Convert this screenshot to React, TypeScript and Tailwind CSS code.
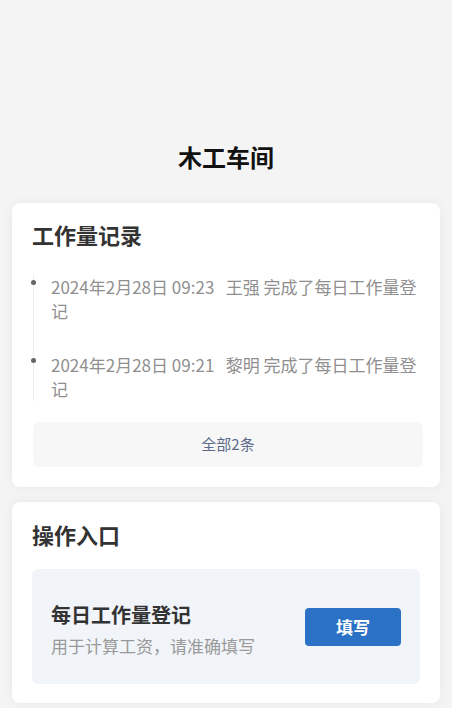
import React from 'react';

type Record = {
  id: string;
  time: string;
  name: string;
  action: string;
};

const records: Record[] = [
  { id: 'r1', time: '2024年2月28日 09:23', name: '王强', action: '完成了每日工作量登记' },
  { id: 'r2', time: '2024年2月28日 09:21', name: '黎明', action: '完成了每日工作量登记' },
];

const font = { fontFamily: '"Noto Sans CJK SC", "Noto Sans", sans-serif' };

export default function App() {
  return (
    <div className="min-h-screen bg-[#f4f4f4] px-3 pb-4" style={font}>
      {/* Page title */}
      <div className="pt-[141px] pb-[30px] text-center">
        <h1 className="text-[24px] leading-[32px] font-bold text-[#111]">木工车间</h1>
      </div>

      {/* Work records */}
      <div className="rounded-lg bg-white pt-4 pb-5 shadow-[0_0_12px_rgba(0,0,0,0.05)]">
        <h2 className="px-5 text-[22px] leading-[30px] font-bold text-[#333]">工作量记录</h2>
        <div className="mt-[26px] ml-[21px] mr-5 border-l border-[#eeeeee]">
          {records.map((r, i) => (
            <div key={r.id} className={i > 0 ? 'relative mt-[30px] pl-[17px]' : 'relative pl-[17px]'}>
              <span className="absolute left-[-3px] top-[5px] h-[5px] w-[5px] rounded-full bg-[#666]" />
              <p className="text-[17px] leading-[24px] text-[#8f8f8f]">
                {`${r.time}\u00a0\u00a0\u00a0${r.name} ${r.action}`}
              </p>
            </div>
          ))}
        </div>
        <button className="mt-[21px] ml-[21px] mr-[17px] flex h-[45px] w-[calc(100%-38px)] items-center justify-center rounded-md bg-[#f7f7f8] text-[15px] text-[#5b6a8a]">
          全部2条
        </button>
      </div>

      {/* Actions */}
      <div className="mt-[15px] rounded-lg bg-white px-5 pt-[17px] pb-[19px] shadow-[0_0_12px_rgba(0,0,0,0.05)]">
        <h2 className="text-[22px] leading-[30px] font-bold text-[#333]">操作入口</h2>
        <div className="mt-5 flex h-[115px] items-center justify-between rounded-md bg-[#f1f4f8] pl-[19px] pr-[19px]">
          <div className="pt-[6px]">
            <p className="text-[20px] leading-[28px] font-bold text-[#333]">每日工作量登记</p>
            <p className="mt-[5px] text-[17px] leading-[24px] text-[#999]">用于计算工资，请准确填写</p>
          </div>
          <button className="h-[38px] w-[96px] rounded-[4px] bg-[#2b72c6] text-[17px] font-bold text-white">
            填写
          </button>
        </div>
      </div>
    </div>
  );
}
